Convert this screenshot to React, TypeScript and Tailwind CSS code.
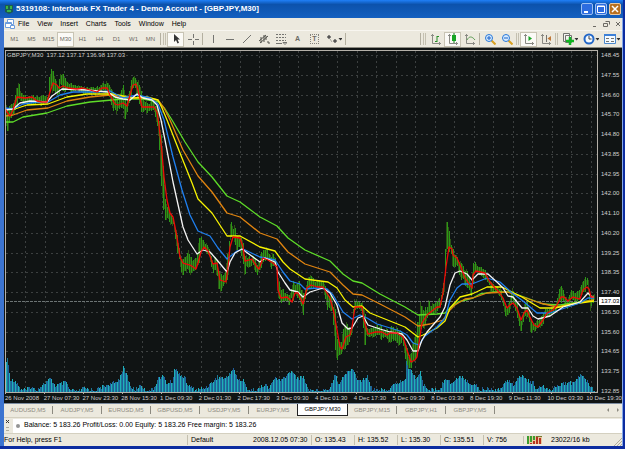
import { Fragment, type ReactNode } from "react";
import clsx from "clsx";

const PRICES = [
  "148.45", "147.55", "146.60", "145.70", "144.80", "143.85", "142.95", "142.00", "141.10",
  "140.20", "139.25", "138.35", "137.40", "136.50", "135.60", "134.65", "133.75", "132.85",
];

const TIMES = [
  "26 Nov 2008", "27 Nov 07:30", "27 Nov 23:30", "28 Nov 15:30", "1 Dec 09:30", "2 Dec 01:30",
  "2 Dec 17:30", "3 Dec 09:30", "4 Dec 01:30", "4 Dec 17:30", "5 Dec 09:30", "8 Dec 03:30",
  "8 Dec 19:30", "9 Dec 11:30", "10 Dec 03:30", "10 Dec 19:30",
];

const PERIODS = ["M1", "M5", "M15", "M30", "H1", "H4", "D1", "W1", "MN"];
const MENU = ["File", "View", "Insert", "Charts", "Tools", "Window", "Help"];
const TABS = [
  "AUDUSD,M5", "AUDJPY,M5", "EURUSD,M5", "GBPUSD,M5", "USDJPY,M5", "EURJPY,M5",
  "GBPJPY,M30", "GBPJPY,M15", "GBPJPY,H1", "GBPJPY,M5",
];

// x, high, low
const RANGE = [
  [5, 95, 122], [8, 108, 137], [10, 104, 118], [13, 100, 118], [16, 80, 107], [20, 85, 103],
  [24, 95, 103], [30, 95, 105], [42, 95, 106], [48, 96, 104], [49, 78, 104], [51, 68, 95], [54, 68, 90],
  [58, 85, 100], [60, 72, 90], [66, 76, 92], [70, 82, 92], [80, 86, 92], [95, 88, 96],
  [103, 82, 93], [106, 80, 92], [111, 88, 106], [115, 95, 118], [118, 100, 108], [123, 85, 118],
  [126, 100, 118], [129, 90, 108], [131, 78, 95], [134, 75, 90], [138, 80, 100], [141, 92, 120],
  [147, 103, 112], [154, 100, 115], [157, 104, 130], [159, 120, 165], [161, 130, 185],
  [163, 165, 210], [165, 195, 228], [167, 205, 220], [170, 210, 233], [173, 215, 225],
  [177, 235, 255], [181, 255, 275], [185, 250, 275], [187, 245, 270], [190, 258, 280],
  [195, 258, 272], [199, 238, 262], [201, 237, 255], [204, 238, 252], [209, 248, 258],
  [213, 258, 275], [217, 255, 278], [218, 270, 300], [221, 275, 293], [225, 270, 287],
  [228, 240, 275], [230, 220, 250], [232, 218, 240], [236, 230, 250], [240, 235, 250],
  [244, 247, 275], [247, 257, 272], [252, 255, 265], [257, 260, 277], [260, 255, 270],
  [264, 245, 262], [268, 250, 263], [272, 252, 272], [276, 258, 270], [278, 270, 300],
  [282, 290, 305], [290, 290, 305], [294, 274, 300], [296, 285, 297], [300, 280, 308],
  [303, 288, 317], [307, 275, 293], [310, 275, 288], [317, 280, 290], [323, 282, 290],
  [327, 287, 312], [332, 295, 312], [335, 310, 362], [337, 330, 365], [341, 335, 360],
  [344, 318, 350], [348, 325, 347], [352, 325, 335], [354, 291, 315], [357, 300, 310],
  [361, 300, 312], [364, 310, 345], [368, 325, 343], [372, 328, 338], [376, 325, 335],
  [380, 325, 338], [388, 328, 345], [392, 325, 340], [398, 328, 348], [402, 330, 342],
  [405, 340, 360], [408, 350, 372], [412, 340, 372], [416, 330, 360], [419, 300, 345],
  [420, 291, 330], [424, 310, 330], [427, 300, 320], [433, 303, 315], [436, 300, 313],
  [440, 297, 310], [442, 285, 305], [444, 275, 298], [445, 240, 290], [446, 222, 260],
  [448, 223, 250], [450, 230, 260], [452, 245, 265], [455, 250, 268], [459, 258, 275],
  [462, 262, 285], [467, 270, 292], [471, 280, 296], [473, 260, 285], [475, 258, 275],
  [478, 266, 275], [485, 270, 280], [490, 280, 290], [495, 285, 292], [500, 288, 300],
  [503, 295, 310], [506, 305, 320], [510, 298, 312], [512, 287, 303], [516, 300, 318],
  [519, 310, 333], [521, 315, 333], [524, 300, 325], [527, 302, 318], [530, 315, 333],
  [532, 322, 335], [535, 322, 332], [540, 318, 330], [545, 308, 320], [551, 307, 315],
  [556, 303, 312], [559, 288, 302], [561, 285, 305], [564, 290, 305], [567, 298, 310],
  [571, 290, 302], [576, 292, 302], [581, 280, 300], [584, 278, 292], [587, 272, 290],
  [589, 290, 300], [590, 300, 312], [592, 292, 303], [594, 295, 301],
];

// x, top of the volume bar
const VOLUME = [
  [5, 363], [7, 358], [8, 365], [10, 378], [16, 381], [20, 388], [26, 389], [30, 386], [36, 389],
  [43, 383], [50, 378], [55, 385], [61, 383], [66, 381], [69, 389], [78, 391], [83, 387],
  [88, 388], [96, 389], [103, 385], [110, 383], [116, 381], [119, 377], [123, 367], [127, 375],
  [130, 385], [134, 389], [141, 384], [145, 390], [153, 388], [158, 377], [163, 375], [166, 382],
  [172, 381], [174, 368], [180, 373], [185, 378], [188, 385], [196, 389], [204, 387], [210, 383],
  [217, 376], [226, 377], [233, 367], [237, 378], [243, 380], [248, 389], [257, 389], [265, 383],
  [268, 388], [275, 376], [280, 380], [292, 369], [297, 378], [303, 375], [307, 387], [314, 390],
  [328, 388], [332, 381], [335, 372], [338, 383], [343, 375], [352, 367], [358, 380], [365, 378],
  [367, 375], [372, 388], [386, 390], [393, 384], [402, 380], [405, 378], [406, 360], [409, 368],
  [412, 371], [415, 377], [420, 371], [423, 384], [430, 389], [440, 388], [445, 376], [450, 382],
  [462, 375], [468, 382], [476, 383], [479, 389], [488, 387], [493, 389], [502, 386], [507, 378],
  [513, 383], [522, 374], [527, 380], [533, 382], [536, 388], [543, 386], [550, 389], [560, 383],
  [573, 382], [580, 374], [587, 380], [594, 390],
];

const AVERAGES = [
  {
    color: "#5edc28",
    points: "5,122 13,122 23,117 47,113 67,106 90,102 123,99 143,99 159,102 165,109 172,120 185,142 198,162 212,177 227,196 240,202 260,217 277,226 288,238 305,250 330,261 343,274 353,281 362,283 380,294 405,307 418,315 437,314 445,313 450,308 458,302 473,298 480,294 493,292 510,292 527,298 543,304 560,305 573,303 594,300",
  },
  {
    color: "#e08410",
    points: "5,116 13,115 27,110 48,108 67,101 90,97 110,95 133,98 147,98 158,100 164,108 170,120 183,150 198,176 212,192 227,213 240,217 260,233 277,239 288,252 305,264 330,272 343,285 353,294 362,295 380,304 405,317 418,326 430,324 443,320 450,310 455,305 465,299 473,298 487,293 507,292 523,297 540,303 557,307 573,304 594,300",
  },
  {
    color: "#f8f400",
    points: "5,109 15,109 27,105 48,104 67,97 87,94 113,94 133,98 147,97 158,100 162,108 167,120 180,153 192,183 198,199 212,213 227,236 240,236 260,247 275,251 283,262 290,269 305,279 328,282 337,288 345,300 353,307 362,306 370,313 390,321 405,327 418,337 423,335 437,328 445,321 450,308 460,297 472,294 487,287 502,287 512,292 522,297 530,302 540,308 555,308 573,304 594,301",
  },
  {
    color: "#2080f0",
    points: "5,108 13,109 23,104 37,102 48,102 60,95 73,92 97,92 110,91 123,98 137,95 150,98 158,104 164,120 173,157 182,190 190,215 198,231 210,236 218,248 227,259 237,251 243,249 260,257 275,260 283,272 290,281 300,284 305,289 317,288 327,289 333,295 343,312 352,319 360,315 367,318 377,324 400,331 407,335 413,343 419,345 425,336 437,327 445,318 450,300 457,288 462,284 472,284 487,278 500,282 512,293 523,301 537,313 550,313 562,309 580,303 588,298 594,298",
  },
  {
    color: "#f4f4f4",
    points: "5,110 13,109 20,103 30,101 47,102 52,96 62,89 87,90 108,92 115,97 123,99 130,100 137,94 143,98 152,100 157,105 161,120 165,140 173,182 177,200 183,227 188,240 197,254 203,250 210,252 217,260 227,272 230,262 235,253 242,249 253,257 260,262 265,258 275,262 278,272 285,283 290,290 298,292 303,297 310,292 323,288 330,293 337,305 342,323 348,329 352,328 358,318 363,316 368,325 380,329 390,332 402,334 407,340 413,351 418,351 422,340 427,332 433,325 440,317 445,307 450,285 455,273 460,271 467,274 472,280 478,274 488,274 498,283 503,288 508,296 513,297 522,308 528,308 533,316 538,319 550,316 563,307 580,302 588,293 592,297 594,297",
  },
  {
    color: "#f00808",
    points: "5,108 7,112 10,116 13,110 17,97 25,98 32,97 37,101 42,102 47,102 50,92 53,83 57,85 59,88 63,86 68,88 77,89 83,88 97,92 102,88 107,88 110,95 115,104 118,105 123,103 127,106 130,95 133,85 136,84 138,90 142,107 150,107 154,107 157,112 159,125 162,153 164,177 167,200 170,213 173,217 177,237 180,257 183,263 190,265 196,269 198,263 201,252 204,247 208,251 213,264 217,263 220,280 226,282 228,267 230,247 233,237 240,238 243,247 245,261 252,259 257,267 259,269 263,258 268,260 273,263 277,267 278,290 281,298 287,297 292,302 295,293 298,293 303,304 307,288 311,285 317,287 323,287 327,293 330,298 334,313 337,330 340,347 342,349 346,337 350,335 352,327 355,307 362,307 364,320 368,334 375,332 382,332 387,335 390,333 397,333 403,337 407,350 411,362 415,360 417,357 419,343 422,323 427,315 437,307 440,307 443,293 446,267 449,247 452,249 453,255 457,258 460,265 465,278 472,288 473,275 476,271 485,273 490,282 495,288 499,292 503,298 507,308 510,305 513,303 517,308 521,320 524,313 527,310 530,317 534,325 538,327 543,320 547,313 553,310 557,305 561,297 564,297 568,301 573,297 580,299 583,290 587,287 589,289 591,297 594,297",
  },
];

function sample(rows: number[][], x: number, column: number) {
  const next = rows.findIndex((row) => row[0] >= x);
  if (next <= 0) return rows[0][column];
  const a = rows[next - 1];
  const b = rows[next];
  return a[column] + ((b[column] - a[column]) * (x - a[0])) / (b[0] - a[0]);
}

function jitter(n: number) {
  const v = Math.sin(n * 12.9898) * 43758.5453;
  return v - Math.floor(v);
}

const COLUMNS = Array.from({ length: 589 }, (_, i) => i + 6);

function Chart() {
  return (
    <svg
      viewBox="5 50 593 344"
      preserveAspectRatio="none"
      className="block h-[344px] min-w-0 flex-1"
      role="img"
      aria-label="GBPJPY M30 price chart"
    >
      <g shapeRendering="crispEdges" stroke="#3c4040" strokeDasharray="2 3">
        {PRICES.map((p, i) => {
          const y = Math.round(55 + i * 19.76) + 0.5;
          return <line key={p} x1={6} x2={597} y1={y} y2={y} />;
        })}
        {TIMES.concat(TIMES.slice(0, 14)).map((_, i) => {
          const x = Math.round(25 + i * 19.5) + 0.5;
          return <line key={i} x1={x} x2={x} y1={51} y2={392} />;
        })}
      </g>
      <g shapeRendering="crispEdges">
        {COLUMNS.map((x) => {
          const top = Math.min(391, sample(VOLUME, x, 1) + jitter(x) * 4 - 1);
          return (
            <rect
              key={x}
              x={x}
              y={top}
              width={1}
              height={392 - top}
              fill={x % 3 === 0 ? "#20b0bc" : x % 3 === 1 ? "#1c7894" : "#205c9c"}
            />
          );
        })}
        {COLUMNS.map((x) => {
          const high = sample(RANGE, x, 1);
          const low = sample(RANGE, x, 2);
          const span = low - high;
          const pair = x >> 1;
          const y = high - 1 + jitter(pair + 3) * span * 0.4;
          return (
            <rect
              key={x}
              x={x}
              y={y}
              width={1}
              height={Math.max(2, low + 1 - jitter(pair + 71) * span * 0.4 - y)}
              fill={x % 2 ? "#2c9818" : "#2c5414"}
            />
          );
        })}
        <line x1={6} x2={597} y1={301.5} y2={301.5} stroke="#6c7474" strokeDasharray="3 1" />
      </g>
      <g fill="none" strokeWidth={1.3} strokeLinejoin="round">
        {AVERAGES.map((line) => (
          <polyline key={line.color} points={line.points} stroke={line.color} />
        ))}
      </g>
      <g shapeRendering="crispEdges" stroke="#b4b0a8" fill="none">
        <path d="M5.5 50v342M5 50.5h592M597.5 50v343M5 392.5h593" />
        {TIMES.map((t, i) => (
          <path key={t} d={`M${5.5 + i * 39} 392v2`} />
        ))}
      </g>
    </svg>
  );
}

function Icon({ children, wide }: { children: ReactNode; wide?: boolean }) {
  return (
    <svg
      viewBox={wide ? "0 0 16 12" : "0 0 12 12"}
      className={clsx("block h-3", wide ? "w-4" : "w-3")}
      fill="none"
      stroke="#747470"
      aria-hidden="true"
    >
      {children}
    </svg>
  );
}

function Tool({ label, active, children, wide }: { label: string; active?: boolean; children: ReactNode; wide?: boolean }) {
  return (
    <button
      type="button"
      aria-label={label}
      aria-pressed={active}
      className={clsx(
        "flex h-[15px] shrink-0 items-center justify-center",
        wide ? "w-[21px]" : "w-[17px]",
        active && "border border-[#c8c4b4] bg-[#fbfaf6]",
      )}
    >
      <Icon wide={wide}>{children}</Icon>
    </button>
  );
}

function Divider() {
  return <span className="mx-px h-3 w-px shrink-0 bg-[#b4b0a0]" />;
}

function Grip() {
  return <span className="mx-px h-3 w-[3px] shrink-0 border-x border-[#c4c0b0]" />;
}

const axes = <path d="M2.5 1v9.500H11M1 2.500h3M9.500 9v3" stroke="#8a8a84" />;
const arrow = <path d="M12.500 5h4l-2 2.500z" fill="#333" stroke="none" />;

function Toolbar() {
  return (
    <div className="flex h-4 items-center bg-[#ece9de] pl-[2px]">
      {PERIODS.map((p) => (
        <button
          key={p}
          type="button"
          className={clsx(
            "h-[15px] w-[17px] shrink-0 text-center text-[6px] text-[#6c6a64]",
            p === "M30" && "border border-[#c8c4b4] bg-[#fbfaf6]",
          )}
        >
          {p}
        </button>
      ))}
      <Divider />
      <Grip />
      <Tool label="Cursor" active>
        <path d="M4 1v8l2-2 1.500 3.500 1.500-.7L7.500 6.500H10z" fill="#333" stroke="none" />
      </Tool>
      <Tool label="Crosshair">
        <path d="M6.500 1v4M6.500 8v4M1 6.500h4M8 6.500h4" />
      </Tool>
      <Divider />
      <Tool label="Vertical line"><path d="M6.500 2v8" /></Tool>
      <Tool label="Horizontal line"><path d="M2 6.500h8" /></Tool>
      <Tool label="Trendline"><path d="M2 10l8-8" /></Tool>
      <Tool label="Equidistant channel">
        <path d="M1 8l7-6M2 10l8-7M3 4v6M6 2v7M8 3v4M9 9h2v2" stroke="#55554f" />
      </Tool>
      <Tool label="Fibonacci retracement">
        <path d="M1 1.500h10M1 4.500h10M1 7.500h10" strokeDasharray="2 1" />
        <path d="M1 10.500h6M8 9.500h4l-2 2z" />
      </Tool>
      <button type="button" aria-label="Text" className="h-[15px] w-[17px] shrink-0 text-[7px] font-bold text-[#6c6a64]">
        A
      </button>
      <button type="button" aria-label="Text label" className="flex h-[15px] w-[17px] shrink-0 items-center justify-center">
        <span className="h-[10px] w-[9px] border border-dotted border-[#84827c] text-center text-[7px] leading-[8px] font-bold text-[#6c6a64]">
          T
        </span>
      </button>
      <Tool label="Arrows" wide>
        <path d="M1 4l2-2 2 2-2 2zM7 8l2-2 2 2-2 2zM4 6l2 3" fill="#555" strokeWidth={0.6} />
        {arrow}
      </Tool>
      <Divider />
      <span className="min-w-0 flex-1" />
      <Divider />
      <Grip />
      <Tool label="Bar chart">
        {axes}
        <path d="M7 3v6M7 3.500h2M5 8.500h2" stroke="#248c24" />
      </Tool>
      <Tool label="Candlesticks" active>
        {axes}
        <path d="M7 0v10" stroke="#0c7c14" />
        <path d="M5 2h4v6H5z" fill="#18a424" stroke="none" />
      </Tool>
      <Tool label="Line chart">
        {axes}
        <path d="M3 7c2-4 5-4 8 0" stroke="#5c9c54" />
      </Tool>
      <Divider />
      <Tool label="Zoom in">
        <path d="M7.500 7.500l4 4" stroke="#d8a020" strokeWidth={2} />
        <circle cx="5" cy="5" r="3.500" fill="#d8ecff" stroke="#2878d8" />
        <path d="M3 5h4M5 3v4" stroke="#1860c8" />
      </Tool>
      <Tool label="Zoom out">
        <path d="M7.500 7.500l4 4" stroke="#d8a020" strokeWidth={2} />
        <circle cx="5" cy="5" r="3.500" fill="#d8ecff" stroke="#2878d8" />
        <path d="M3 5h4" stroke="#1860c8" />
      </Tool>
      <Grip />
      <Tool label="Auto scroll" active>
        {axes}
        <path d="M5.500 3v5L9 5.500z" fill="#18a424" stroke="none" />
      </Tool>
      <Tool label="Chart shift">
        {axes}
        <path d="M6.500 2v7" />
        <path d="M11 3v5L7.500 5.500z" fill="#c07838" stroke="none" />
      </Tool>
      <Grip />
      <Tool label="Indicators" wide>
        <path d="M1.500.5h6v8h-6zM3.500 2.500h6v7h-6z" fill="#f4f4f0" />
        <path d="M8 4v8M4 8h8" stroke="#10b420" strokeWidth={2.5} />
        {arrow}
      </Tool>
      <Tool label="Periods" wide>
        <circle cx="6" cy="6" r="4.500" fill="#f4faff" stroke="#2468c8" strokeWidth={2} />
        <path d="M6 3v3h2.500" stroke="#444" />
        {arrow}
      </Tool>
      <Tool label="Templates" wide>
        <path d="M.5 1.500h11v9H.5z" fill="#f4faff" stroke="#4c88cc" />
        <path d="M0 2h12" stroke="#3c80d8" strokeWidth={2} />
        <path d="M2 5.500h3M7 5.500h3M2 8.500h3M7 8.500h3" />
        {arrow}
      </Tool>
    </div>
  );
}

function TitleBar() {
  return (
    <header className="flex h-[18px] items-center gap-[2px] bg-linear-to-b from-[#2080f8] via-[#0c52ac] via-25% to-[#1460c0] pr-[2px] pl-[5px]">
      <svg viewBox="0 0 8 10" className="h-[10px] w-2" aria-hidden="true">
        <path d="M0 1h8v7L4 10 0 8z" fill="#1c5c50" />
        <path d="M1 2h2v3H1zM5 2h2v3H5zM2 6h4v2H2z" fill="#38b448" />
      </svg>
      <h1 className="min-w-0 flex-1 truncate pl-px text-[8px] font-bold text-white">
        5319108: Interbank FX Trader 4 - Demo Account - [GBPJPY,M30]
      </h1>
      <button type="button" aria-label="Minimize" className="h-3 w-3 rounded-xs border border-[#9cc0f4] bg-[#2c6ce0]">
        <svg viewBox="0 0 10 10" aria-hidden="true"><path d="M2 7h4v2H2z" fill="#fff" /></svg>
      </button>
      <button type="button" aria-label="Maximize" className="h-3 w-3 rounded-xs border border-[#9cc0f4] bg-[#2c6ce0]">
        <svg viewBox="0 0 10 10" fill="none" stroke="#fff" aria-hidden="true">
          <path d="M1.500 2h7v6.500h-7zM1.500 2.500h7" />
        </svg>
      </button>
      <button type="button" aria-label="Close" className="h-3 w-3 rounded-xs border border-[#e8c8a0] bg-[#b87020]">
        <svg viewBox="0 0 10 10" stroke="#fff" strokeWidth={1.5} aria-hidden="true">
          <path d="M2 2l6 6M8 2L2 8" />
        </svg>
      </button>
    </header>
  );
}

function MenuBar() {
  return (
    <nav className="flex h-[13px] items-center border-b border-[#f8f6f0] bg-[#ece9de] px-px">
      <svg viewBox="0 0 10 10" className="mr-[3px] h-[10px] w-[10px]" fill="#fff" stroke="#6c9cdc" aria-hidden="true">
        <path d="M2.500.5h6v5h-6z" />
        <path d="M.5 3.500h6v5h-6zM.5 4.500h6" />
        <path d="M5.500 6.500h4v3h-4z" />
      </svg>
      <div className="flex flex-1 gap-2">
        {MENU.map((item) => (
          <button key={item} type="button" className="leading-[10px]">
            {item}
          </button>
        ))}
      </div>
      <svg viewBox="0 0 30 8" className="h-2 w-[30px]" fill="none" stroke="#6c6a64" aria-hidden="true">
        <path d="M2 6.500h3M14.500 1.500h4v3M12.500 3.500h4v3h-4zM25 2l4 4M29 2l-4 4" />
      </svg>
    </nav>
  );
}

function ChartWindow() {
  return (
    <main className="relative bg-[#101414] pt-[2px] pl-px text-[6px] text-[#d0d0d0]">
      <div className="flex">
        <Chart />
        <div className="relative flex h-[344px] w-6 shrink-0 flex-col justify-between pt-[2px] pl-[3px] leading-[6px]">
          {PRICES.map((p) => (
            <span key={p}>{p}</span>
          ))}
          <span className="absolute top-[247px] left-px w-[21px] bg-white pl-[2px] leading-[8px] text-black">137.03</span>
        </div>
      </div>
      <div className="flex h-[9px]">
        {TIMES.map((t) => (
          <span key={t} className="w-[39px] min-w-0 leading-[9px] whitespace-nowrap last:w-auto last:shrink-0">
            {t}
          </span>
        ))}
      </div>
      <p className="absolute top-[4px] left-[3px] bg-[#101414] leading-[6px]">GBPJPY,M30 &nbsp;137.12 137.17 136.98 137.03</p>
    </main>
  );
}

function ChartTabs() {
  return (
    <div className="flex h-[14px] items-start border-t border-[#7c8ca0] bg-[#ece9de] text-[6px] text-[#8c8a80]">
      {TABS.map((tab, i) => (
        <Fragment key={tab}>
          <button
            type="button"
            className={clsx(
              "h-3 shrink-0 whitespace-nowrap",
              tab === "GBPJPY,M30"
                ? "w-[51px] border border-t-0 border-[#222] bg-white text-black"
                : "w-12",
            )}
          >
            {tab}
          </button>
          {i !== 5 && i !== 6 && <span className="mt-[2px] h-2 w-px shrink-0 bg-[#8c8a80]" />}
        </Fragment>
      ))}
      <svg viewBox="0 0 14 6" className="mt-[3px] mr-[2px] ml-auto h-[6px] w-[14px]" fill="#8c8a80" aria-hidden="true">
        <path d="M3 1v4L1 3zM11 1v4l2-2z" />
      </svg>
    </div>
  );
}

function AccountPanel() {
  return (
    <section className="flex h-4 items-center gap-[3px] border-t border-[#d4d0c0] bg-[#ece9de] pl-px">
      <button type="button" aria-label="Close panel" className="flex h-[14px] w-[5px] items-start">
        <svg viewBox="0 0 5 14" className="h-[14px] w-[5px]" stroke="#333" aria-hidden="true">
          <path d="M1 1l3 3M4 1L1 4" />
          <path d="M1 8.500h3M1 11.500h3" stroke="#b0ac9c" />
        </svg>
      </button>
      <div className="flex h-[14px] flex-1 items-center gap-[4px] bg-white pl-[3px]">
        <span className="h-[4px] w-[4px] rounded-full bg-[#949494]" />
        <p className="whitespace-nowrap">
          Balance: 5 183.26 Profit/Loss: 0.00 Equity: 5 183.26 Free margin: 5 183.26
        </p>
      </div>
    </section>
  );
}

function StatusBar() {
  const cell = "shrink-0 border-l border-[#c4c0b0] pl-[3px] leading-[10px]";
  return (
    <footer className="flex h-[13px] items-center border-t border-[#d4d0c0] bg-[#ece9de]">
      <span className="min-w-0 flex-1 truncate">For Help, press F1</span>
      <span className={clsx(cell, "w-[66px]")}>Default</span>
      <span className="w-[58px] shrink-0 leading-[10px]">2008.12.05 07:30</span>
      <span className={clsx(cell, "w-[43px]")}>O: 135.43</span>
      <span className={clsx(cell, "w-[43px]")}>H: 135.52</span>
      <span className={clsx(cell, "w-[43px]")}>L: 135.30</span>
      <span className={clsx(cell, "w-[43px]")}>C: 135.51</span>
      <span className={clsx(cell, "w-[40px]")}>V: 756</span>
      <span className={cell}>
        <svg viewBox="0 0 15 8" className="h-2 w-[15px]" aria-hidden="true">
          <path d="M0 0h15v8H0z" fill="#e8c8a0" />
          <path d="M0 0h2v8H0zM3 0h2v6H3zM6 0h2v4H6z" fill="#3c9c30" />
          <path d="M3 7h2v1H3zM6 5h2v3H6zM9 0h2v8H9zM12 2h2v6h-2z" fill="#b83420" />
          <path d="M9 0h6v1H9z" fill="#787830" />
        </svg>
      </span>
      <span className="w-[72px] shrink-0 pl-[9px] leading-[10px]">23022/16 kb</span>
      <svg viewBox="0 0 8 8" className="mt-auto h-2 w-2 shrink-0" stroke="#b0ac9c" aria-hidden="true">
        <path d="M8 0L0 8M8 3L3 8M8 6L6 8" />
      </svg>
    </footer>
  );
}

export default function App() {
  return (
    <div className="border-r-2 border-b-3 border-[#0c2ca0] bg-[#0c2ca0] font-['Liberation_Sans',Arial,sans-serif] text-[7px] text-black">
      <TitleBar />
      <div className="border-r border-l-4 border-r-[#84a8e8] border-l-[#3c74d0]">
        <MenuBar />
        <Toolbar />
        <div className="h-px bg-[#8c8a80]" />
        <ChartWindow />
        <ChartTabs />
        <AccountPanel />
        <StatusBar />
      </div>
    </div>
  );
}
